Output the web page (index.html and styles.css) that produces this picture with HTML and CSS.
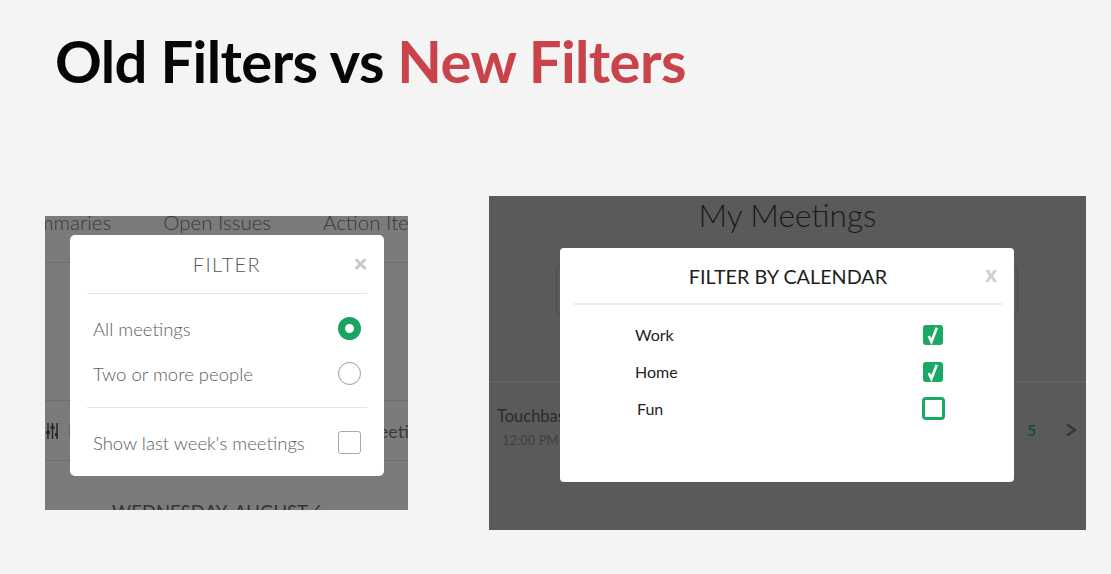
FILE: index.html
```html
<!DOCTYPE html>
<html>
<head>
<meta charset="utf-8">
<title>Old Filters vs New Filters</title>
<link rel="stylesheet" href="styles.css">
</head>
<body>
<h1 class="title">Old Filters vs <span class="new">New Filters</span></h1>
<div class="compare">
  <div class="shot old-shot">
    <div class="tabs"><span>Summaries</span><span>Open Issues</span><span>Action Items</span></div>
    <div class="spacer"></div>
    <div class="toolbar">
      <svg class="sliders" viewBox="0 0 12 18" width="12" height="18">
        <g stroke="#2b2b2b" stroke-width="1.6" fill="none">
          <line x1="2" y1="1" x2="2" y2="17"/>
          <line x1="6.5" y1="1" x2="6.5" y2="17"/>
          <line x1="11" y1="1" x2="11" y2="17"/>
        </g>
        <g fill="#2b2b2b">
          <rect x="0" y="9" width="4" height="3"/>
          <rect x="4.5" y="4" width="4" height="3"/>
          <rect x="9" y="11" width="4" height="3"/>
        </g>
      </svg>
      <span class="tb-label">Filter</span>
      <span class="tb-right">Meetings</span>
    </div>
    <div class="date">WEDNESDAY, AUGUST 6</div>

    <div class="modal old-modal">
      <div class="om-head">
        <span></span>
        <span class="om-title">FILTER</span>
        <svg class="om-close" viewBox="0 0 12 12" width="13" height="12">
          <path d="M2 2 L10 10 M10 2 L2 10" stroke="#c9c9c9" stroke-width="3" stroke-linecap="round"/>
        </svg>
      </div>
      <div class="om-section">
        <div class="om-row"><span>All meetings</span><span class="radio on"></span></div>
        <div class="om-row"><span>Two or more people</span><span class="radio"></span></div>
      </div>
      <div class="om-section last">
        <div class="om-row"><span>Show last week's meetings</span><span class="box"></span></div>
      </div>
    </div>
  </div>

  <div class="shot new-shot">
    <div class="page-title">My Meetings</div>
    <div class="searchbox"></div>
    <div class="meeting">
      <div class="m-info">
        <div class="m-name">Touchbase with team</div>
        <div class="m-time">12:00 PM - 1:00 PM</div>
      </div>
      <div class="m-pager">
        <span class="m-num">5</span>
        <svg class="m-next" viewBox="0 0 12 14" width="12" height="14">
          <path d="M2 1.5 L10 7 L2 12.5" stroke="#363636" stroke-width="2.4" fill="none"/>
        </svg>
      </div>
    </div>

    <div class="modal new-modal">
      <div class="nm-head">
        <span></span>
        <span class="nm-title">FILTER BY CALENDAR</span>
        <span class="nm-close">x</span>
      </div>
      <div class="nm-list">
        <div class="nm-row"><span>Work</span><span class="cb-wrap"><span class="cb on"><svg viewBox="0 0 20 20" width="20" height="20"><path d="M5.8 11 L8.4 16.8 L13.8 2.8" stroke="#fff" stroke-width="2.6" fill="none" stroke-linejoin="miter"/></svg></span></span></div>
        <div class="nm-row"><span>Home</span><span class="cb-wrap"><span class="cb on"><svg viewBox="0 0 20 20" width="20" height="20"><path d="M5.8 11 L8.4 16.8 L13.8 2.8" stroke="#fff" stroke-width="2.6" fill="none" stroke-linejoin="miter"/></svg></span></span></div>
        <div class="nm-row fun"><span>Fun</span><span class="cb-wrap"><span class="cb off"></span></span></div>
      </div>
    </div>
  </div>
</div>
</body>
</html>
```
FILE: styles.css
```css
* { box-sizing: border-box; }
html, body { margin: 0; padding: 0; }
body {
  background: #f4f4f4;
  font-family: Lato, "Open Sans", "Liberation Sans", sans-serif;
  width: 1111px;
  height: 574px;
  overflow: hidden;
}
.title {
  margin: 25px 0 0 55px;
  font-size: 58px;
  line-height: 72px;
  font-weight: 700;
  color: #060606;
  letter-spacing: -0.6px;
}
.title .new { color: #c9434b; }

.compare {
  display: flex;
  align-items: flex-start;
  padding-top: 99px;
}
.shot {
  position: relative;
  overflow: hidden;
  flex: none;
}

/* ---------- old screenshot ---------- */
.old-shot {
  width: 363px;
  height: 294px;
  margin: 20px 0 0 45px;
  background: #7b7b7b;
  color: #393939;
}
.tabs {
  display: flex;
  gap: 52px;
  margin-left: -30px;
  height: 47px;
  border-bottom: 1px solid #6e6e6e;
  font-size: 20.5px;
  font-weight: 300;
  white-space: nowrap;
}
.tabs span { line-height: 20px; margin-top: -4px; }
.spacer { height: 137px; }
.toolbar {
  height: 61px;
  border-top: 1px solid #6e6e6e;
  border-bottom: 1px solid #6e6e6e;
  display: flex;
  align-items: center;
  padding-left: 1px;
  font-size: 18px;
  white-space: nowrap;
}
.sliders { flex: none; }
.tb-label { margin-left: 10px; }
.tb-right { margin-left: auto; margin-right: -28px; }
.date {
  margin-top: 41px;
  padding-right: 18px;
  text-align: center;
  font-size: 18.5px;
  line-height: 20px;
  color: #333;
}

.modal { position: absolute; background: #fff; }
.old-modal {
  left: 25px;
  top: 19px;
  width: 314px;
  height: 241px;
  border-radius: 5px;
  color: #5e5e5e;
  font-weight: 300;
}
.om-head {
  margin: 0 17px;
  height: 59px;
  border-bottom: 1px solid #e3e3e3;
  display: grid;
  grid-template-columns: 1fr auto 1fr;
  align-items: center;
}
.om-title {
  font-size: 20px;
  letter-spacing: 1.4px;
  color: #555;
  font-weight: 300;
}
.om-close { justify-self: end; }
.om-section {
  margin: 0 17px;
  padding: 12px 6px 11px;
  border-bottom: 1px solid #e3e3e3;
}
.om-section.last { border-bottom: none; }
.om-row {
  height: 45px;
  display: flex;
  align-items: center;
  justify-content: space-between;
  font-size: 18.5px;
}
.radio {
  width: 23px;
  height: 23px;
  border-radius: 50%;
  border: 1px solid #9a9a9a;
}
.radio.on { border: 7px solid #1aa361; }
.box {
  width: 23px;
  height: 23px;
  border-radius: 3px;
  border: 1px solid #a8a8a8;
}

/* ---------- new screenshot ---------- */
.new-shot {
  width: 597px;
  height: 334px;
  margin-left: 81px;
  background: #5a5a5a;
}
.page-title {
  margin-top: 1px;
  text-align: center;
  font-size: 31.5px;
  line-height: 36px;
  font-weight: 300;
  color: #1a1a1a;
}
.searchbox {
  margin: 32px 0 0 67px;
  width: 462px;
  height: 50px;
  border: 1px solid #4c4c4c;
  border-radius: 5px;
}
.meeting {
  margin-top: 66px;
  border-top: 1px solid #666;
  display: flex;
  padding: 0 9px 0 8px;
  white-space: nowrap;
}
.m-info { padding-top: 24px; }
.m-name { font-size: 16.5px; line-height: 20px; color: #2a2a2a; }
.m-time {
  margin-top: 6px;
  padding-left: 5px;
  font-size: 13px;
  line-height: 16px;
  color: #404040;
}
.m-pager {
  margin-left: auto;
  margin-top: 29px;
  display: flex;
  align-items: center;
  gap: 29px;
}
.m-num { font-size: 15px; line-height: 20px; font-weight: 700; color: #1e4a34; }

.new-modal {
  left: 71px;
  top: 52px;
  width: 454px;
  height: 234px;
  border-radius: 4px;
  color: #222;
}
.nm-head {
  margin: 0 12px 0 14px;
  height: 57px;
  border-bottom: 2px solid #ececec;
  display: grid;
  grid-template-columns: 1fr auto 1fr;
  align-items: center;
}
.nm-title { font-size: 19.8px; color: #1e1e1e; }
.nm-close {
  justify-self: end;
  padding-right: 5px;
  font-size: 22px;
  line-height: 22px;
  font-weight: 900;
  color: #cfcfcf;
  margin-top: -3px;
}
.nm-list { padding: 11px 69px 0 75px; }
.nm-row {
  height: 37px;
  display: flex;
  align-items: center;
  justify-content: space-between;
  font-size: 16px;
}
.nm-row.fun span:first-child { padding-left: 2px; }
.cb-wrap {
  width: 24px;
  display: flex;
  justify-content: center;
}
.cb {
  display: block;
  border-radius: 3px;
}
.cb.on { width: 20px; height: 20px; background: #1aa865; }
.cb.on svg { display: block; }
.cb.off {
  width: 23px;
  height: 23px;
  border: 3px solid #1aa865;
  border-radius: 4px;
}
```
